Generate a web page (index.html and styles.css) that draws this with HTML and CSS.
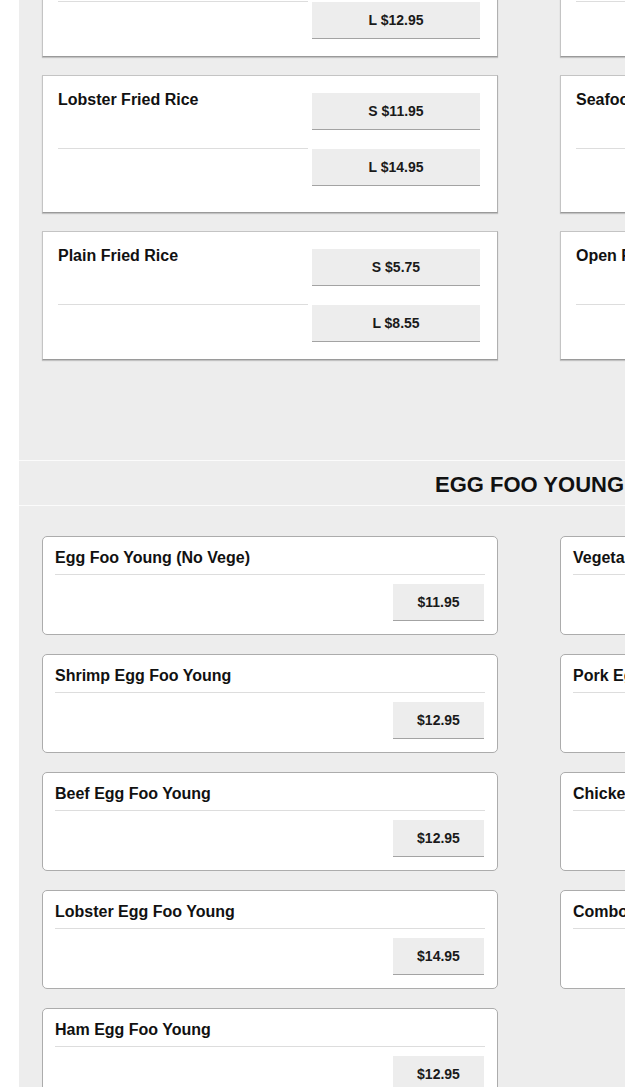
FILE: index.html
```html
<!DOCTYPE html>
<html lang="en">
<head>
<meta charset="utf-8">
<title>Menu</title>
<link rel="stylesheet" href="styles.css">
</head>
<body>
<main class="menu">
  <section class="section section--fried-rice">
    <div class="fr-grid">
      <article class="fr-card">
        <h3 class="fr-name">Shrimp Fried Rice</h3>
        <div class="fr-price"><button class="price-btn">S $9.95</button></div>
        <div class="fr-blank"></div>
        <div class="fr-price"><button class="price-btn">L $12.95</button></div>
      </article>
      <article class="fr-card">
        <h3 class="fr-name">House Special Fried Rice</h3>
        <div class="fr-price"><button class="price-btn">S $9.95</button></div>
        <div class="fr-blank"></div>
        <div class="fr-price"><button class="price-btn">L $12.95</button></div>
      </article>

      <article class="fr-card">
        <h3 class="fr-name">Lobster Fried Rice</h3>
        <div class="fr-price"><button class="price-btn">S $11.95</button></div>
        <div class="fr-blank"></div>
        <div class="fr-price"><button class="price-btn">L $14.95</button></div>
      </article>
      <article class="fr-card fr-card--tall">
        <h3 class="fr-name">Seafood Fried Rice</h3>
        <div class="fr-price"><button class="price-btn">S $11.95</button></div>
        <div class="fr-blank"></div>
        <div class="fr-price"><button class="price-btn">L $14.95</button></div>
      </article>

      <article class="fr-card">
        <h3 class="fr-name">Plain Fried Rice</h3>
        <div class="fr-price"><button class="price-btn">S $5.75</button></div>
        <div class="fr-blank"></div>
        <div class="fr-price"><button class="price-btn">L $8.55</button></div>
      </article>
      <article class="fr-card">
        <h3 class="fr-name">Open Fried Rice</h3>
        <div class="fr-price"><button class="price-btn">S $5.75</button></div>
        <div class="fr-blank"></div>
        <div class="fr-price"><button class="price-btn">L $8.55</button></div>
      </article>
    </div>
  </section>

  <header class="section-head">
    <h2 class="section-title">EGG FOO YOUNG</h2>
  </header>

  <section class="section section--efy">
    <div class="efy-grid">
      <article class="efy-card">
        <h3 class="efy-name">Egg Foo Young (No Vege)</h3>
        <div class="efy-price"><button class="price-btn price-btn--small">$11.95</button></div>
      </article>
      <article class="efy-card">
        <h3 class="efy-name">Vegetable Egg Foo Young</h3>
        <div class="efy-price"><button class="price-btn price-btn--small">$11.95</button></div>
      </article>

      <article class="efy-card">
        <h3 class="efy-name">Shrimp Egg Foo Young</h3>
        <div class="efy-price"><button class="price-btn price-btn--small">$12.95</button></div>
      </article>
      <article class="efy-card">
        <h3 class="efy-name">Pork Egg Foo Young</h3>
        <div class="efy-price"><button class="price-btn price-btn--small">$12.95</button></div>
      </article>

      <article class="efy-card">
        <h3 class="efy-name">Beef Egg Foo Young</h3>
        <div class="efy-price"><button class="price-btn price-btn--small">$12.95</button></div>
      </article>
      <article class="efy-card">
        <h3 class="efy-name">Chicken Egg Foo Young</h3>
        <div class="efy-price"><button class="price-btn price-btn--small">$12.95</button></div>
      </article>

      <article class="efy-card">
        <h3 class="efy-name">Lobster Egg Foo Young</h3>
        <div class="efy-price"><button class="price-btn price-btn--small">$14.95</button></div>
      </article>
      <article class="efy-card">
        <h3 class="efy-name">Combo Egg Foo Young</h3>
        <div class="efy-price"><button class="price-btn price-btn--small">$13.95</button></div>
      </article>

      <article class="efy-card">
        <h3 class="efy-name">Ham Egg Foo Young</h3>
        <div class="efy-price"><button class="price-btn price-btn--small">$12.95</button></div>
      </article>
    </div>
  </section>
</main>
</body>
</html>
```

FILE: styles.css
```css
* {
  box-sizing: border-box;
}

html {
  overflow: hidden;
}

body {
  margin: 0;
  background: #ffffff;
  font-family: "Liberation Sans", Arial, sans-serif;
  color: #111111;
}

.menu {
  margin-left: 19px;
  /* page is shown scrolled part-way down */
  margin-top: -72px;
  width: 1021px;
  min-height: 1400px;
  background: #ededed;
}

.section {
  padding: 0 23px;
}

/* ---------- Fried rice ---------- */

.fr-grid {
  display: grid;
  grid-template-columns: 456px 456px;
  column-gap: 62px;
  row-gap: 18px;
}

.fr-card {
  display: grid;
  grid-template-columns: 250px 168px;
  grid-template-rows: 56px 37px;
  column-gap: 4px;
  align-content: start;
  padding: 17px 16px 17px 15px;
  background: #ffffff;
  border: 1px solid #c4c4c4;
  border-bottom-color: #9a9a9a;
  border-right-color: #b0b0b0;
  box-shadow: 0 1px 1px rgba(0, 0, 0, 0.18);
}

.fr-card--tall {
  padding-bottom: 26px;
}

.fr-name {
  margin: 0;
  font-size: 16px;
  font-weight: bold;
  line-height: 14px;
  border-bottom: 1px solid #dddddd;
}

.fr-price {
  display: flex;
  align-items: flex-start;
}

.price-btn {
  display: flex;
  align-items: center;
  justify-content: center;
  width: 168px;
  height: 37px;
  padding: 0;
  margin: 0;
  border: none;
  border-bottom: 1px solid #a3a3a3;
  background: #ededed;
  font-family: "Liberation Sans", Arial, sans-serif;
  font-size: 14px;
  font-weight: bold;
  color: #1a1a1a;
}

.price-btn--small {
  width: 91px;
  margin-right: 1px;
}

/* ---------- Section heading ---------- */

.section-head {
  margin-top: 100px;
  border-top: 1px solid #fbfbfb;
  border-bottom: 1px solid #fbfbfb;
}

.section-title {
  margin: 0;
  height: 44px;
  padding-top: 3px;
  line-height: 41px;
  text-align: center;
  font-size: 22px;
  font-weight: bold;
  color: #111111;
}

/* ---------- Egg foo young ---------- */

.section--efy {
  padding-top: 30px;
}

.efy-grid {
  display: grid;
  grid-template-columns: 456px 456px;
  column-gap: 62px;
  row-gap: 19px;
}

.efy-card {
  display: flex;
  flex-direction: column;
  padding: 12px 12px 13px 12px;
  background: #ffffff;
  border: 1px solid #acacac;
  border-radius: 5px;
}

.efy-name {
  margin: 0;
  padding-bottom: 7px;
  font-size: 16px;
  font-weight: bold;
  line-height: 18px;
  border-bottom: 1px solid #dddddd;
}

.efy-price {
  display: flex;
  justify-content: flex-end;
  margin-top: 9px;
}
```
